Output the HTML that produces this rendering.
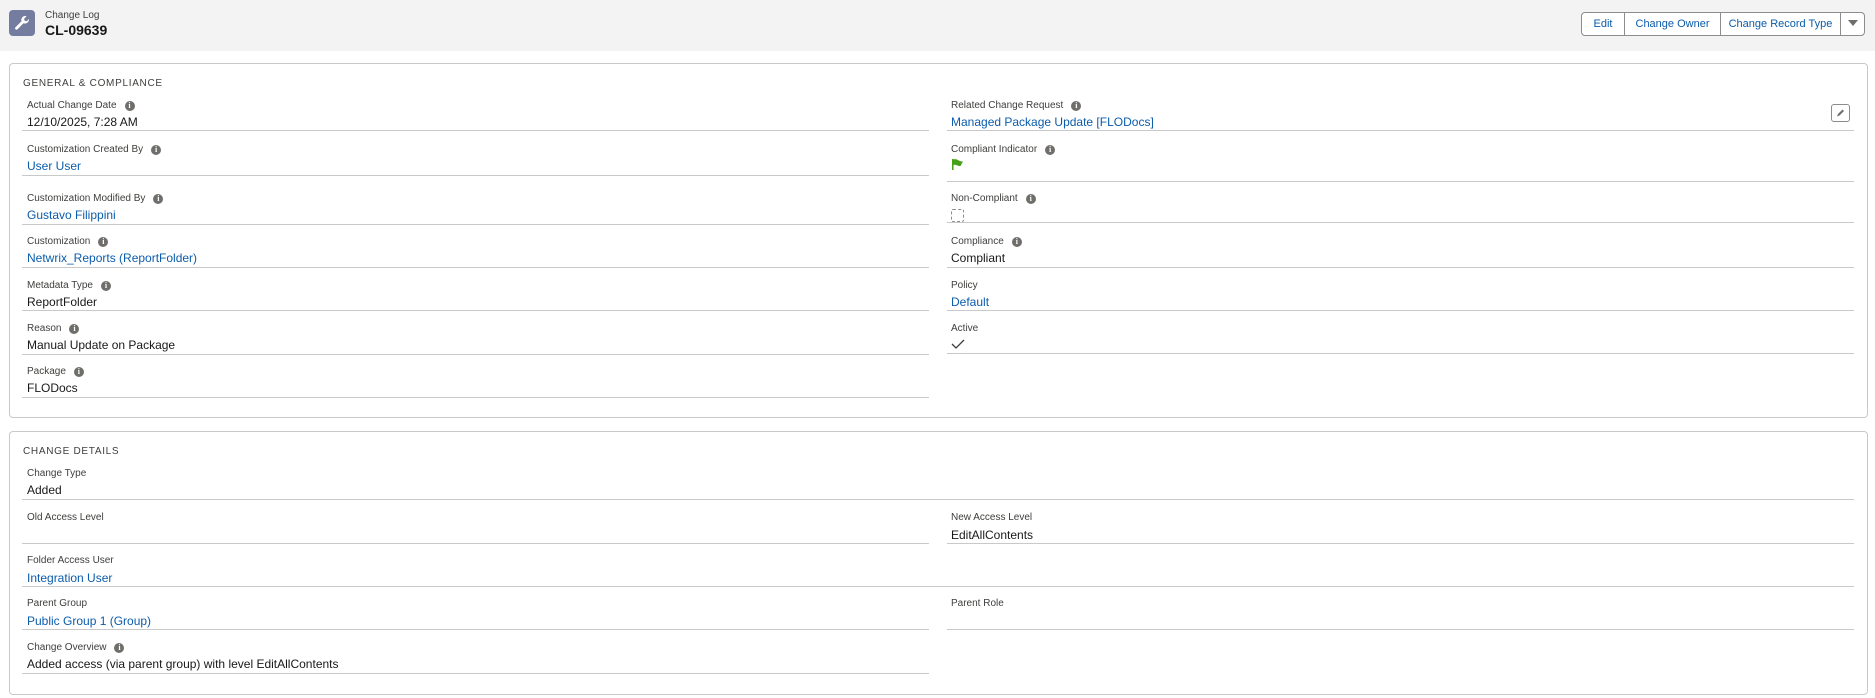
<!DOCTYPE html>
<html><head><meta charset="utf-8"><style>
body{margin:0;width:1875px;height:698px;background:#fff;font-family:"Liberation Sans",Arial,sans-serif;position:relative;overflow:hidden;color:#181818}
.a{position:absolute;white-space:nowrap}
.hdr{position:absolute;left:0;top:0;width:1875px;height:51px;background:#f3f3f3}
.panel{position:absolute;left:9px;width:1857px;border:1px solid #c9c9c9;border-radius:4px;background:#fff}
.t{font-size:10px;letter-spacing:.7px;color:#3e3e3c;text-transform:uppercase}
.l{font-size:10px;color:#3e3e3c}
.v{font-size:12px;color:#181818}
.k{font-size:12px;color:#0b5cab}
.ln{position:absolute;height:1px;background:#c9c9c9}
.i{display:inline-block;width:10px;height:10px;border-radius:50%;background:#706e6b;color:#fff;font-size:8px;font-weight:bold;text-align:center;line-height:10px;margin-left:8px;vertical-align:0px;font-family:"Liberation Serif",serif}
.btn{position:absolute;top:12px;height:24px;border:1px solid #8c8c8c;background:#fff;font-size:11px;color:#0b5cab;line-height:22px;text-align:center;box-sizing:border-box}
</style></head><body>
<div class="hdr"></div>
<div class="a" style="left:9px;top:10px;width:26px;height:26px;background:#747ca0;border-radius:4px">
<svg width="26" height="26" viewBox="0 0 26 26"><path d="M17 6a4 4 0 0 0-4.5 5.2L6.5 17.2a1.4 1.4 0 0 0 2 2l6-6A4 4 0 0 0 20 9l-2.3 2.3-2-.6-.6-2L17.4 6.5z" fill="#fff"/></svg></div>
<div class="a" style="left:45px;top:10px;font-size:10px;color:#3e3e3c">Change Log</div>
<div class="a" style="left:45px;top:22px;font-size:14px;font-weight:bold;color:#181818">CL-09639</div>
<div class="btn" style="left:1581px;width:44px;border-radius:4px 0 0 4px">Edit</div>
<div class="btn" style="left:1624px;width:97px">Change Owner</div>
<div class="btn" style="left:1720px;width:121px">Change Record Type</div>
<div class="btn" style="left:1840px;width:25px;border-radius:0 4px 4px 0"><svg width="10" height="6" viewBox="0 0 10 6" style="vertical-align:1px"><path d="M0 0h10L5 6z" fill="#706e6b"/></svg></div>

<div class="panel" style="top:63px;height:353px"></div>
<div class="a t" style="left:23px;top:78px">General &amp; Compliance</div>

<div class="a l" style="left:27px;top:100px">Actual Change Date<span class="i">i</span></div>
<div class="a v" style="left:27px;top:115px">12/10/2025, 7:28 AM</div>
<div class="ln" style="left:22px;top:130px;width:907px"></div>
<div class="a l" style="left:27px;top:144px">Customization Created By<span class="i">i</span></div>
<div class="a k" style="left:27px;top:159px">User User</div>
<div class="ln" style="left:22px;top:175px;width:907px"></div>
<div class="a l" style="left:27px;top:193px">Customization Modified By<span class="i">i</span></div>
<div class="a k" style="left:27px;top:208px">Gustavo Filippini</div>
<div class="ln" style="left:22px;top:224px;width:907px"></div>
<div class="a l" style="left:27px;top:236px">Customization<span class="i">i</span></div>
<div class="a k" style="left:27px;top:251px">Netwrix_Reports (ReportFolder)</div>
<div class="ln" style="left:22px;top:267px;width:907px"></div>
<div class="a l" style="left:27px;top:280px">Metadata Type<span class="i">i</span></div>
<div class="a v" style="left:27px;top:295px">ReportFolder</div>
<div class="ln" style="left:22px;top:310px;width:907px"></div>
<div class="a l" style="left:27px;top:323px">Reason<span class="i">i</span></div>
<div class="a v" style="left:27px;top:338px">Manual Update on Package</div>
<div class="ln" style="left:22px;top:354px;width:907px"></div>
<div class="a l" style="left:27px;top:366px">Package<span class="i">i</span></div>
<div class="a v" style="left:27px;top:381px">FLODocs</div>
<div class="ln" style="left:22px;top:397px;width:907px"></div>

<div class="a l" style="left:951px;top:100px">Related Change Request<span class="i">i</span></div>
<div class="a k" style="left:951px;top:115px">Managed Package Update [FLODocs]</div>
<div class="a" style="left:1831px;top:104px;width:19px;height:18px;border:1px solid #8c8c8c;border-radius:3px;box-sizing:border-box"><svg width="17" height="16" viewBox="0 0 17 16"><path d="M5 11.5l1-2.5 4.5-4.5 1.5 1.5-4.5 4.5z" fill="#706e6b"/></svg></div>
<div class="ln" style="left:947px;top:130px;width:907px"></div>
<div class="a l" style="left:951px;top:144px">Compliant Indicator<span class="i">i</span></div>
<svg class="a" style="left:951px;top:158px" width="14" height="14" viewBox="0 0 14 14"><path d="M1 1h1.5v11H1z M2.5 1.5C6 0 8 4 12 3.5L9.5 8C7 8.5 5 6 2.5 7z" fill="#45a117"/></svg>
<div class="ln" style="left:947px;top:181px;width:907px"></div>
<div class="a l" style="left:951px;top:193px">Non-Compliant<span class="i">i</span></div>
<div class="a" style="left:951px;top:209px;width:11px;height:11px;border:1px dashed #8c8c8c;border-radius:2px"></div>
<div class="ln" style="left:947px;top:222px;width:907px"></div>
<div class="a l" style="left:951px;top:236px">Compliance<span class="i">i</span></div>
<div class="a v" style="left:951px;top:251px">Compliant</div>
<div class="ln" style="left:947px;top:267px;width:907px"></div>
<div class="a l" style="left:951px;top:280px">Policy</div>
<div class="a k" style="left:951px;top:295px">Default</div>
<div class="ln" style="left:947px;top:310px;width:907px"></div>
<div class="a l" style="left:951px;top:323px">Active</div>
<svg class="a" style="left:951px;top:339px" width="14" height="10" viewBox="0 0 14 10"><path d="M1 5l4 4 8-8" stroke="#3e3e3c" stroke-width="1.3" fill="none"/></svg>
<div class="ln" style="left:947px;top:353px;width:907px"></div>

<div class="panel" style="top:431px;height:262px"></div>
<div class="a t" style="left:23px;top:446px">Change Details</div>
<div class="a l" style="left:27px;top:468px">Change Type</div>
<div class="a v" style="left:27px;top:483px">Added</div>
<div class="ln" style="left:22px;top:499px;width:1832px"></div>
<div class="a l" style="left:27px;top:512px">Old Access Level</div>
<div class="ln" style="left:22px;top:543px;width:907px"></div>
<div class="a l" style="left:951px;top:512px">New Access Level</div>
<div class="a v" style="left:951px;top:528px">EditAllContents</div>
<div class="ln" style="left:947px;top:543px;width:907px"></div>
<div class="a l" style="left:27px;top:555px">Folder Access User</div>
<div class="a k" style="left:27px;top:571px">Integration User</div>
<div class="ln" style="left:22px;top:586px;width:1832px"></div>
<div class="a l" style="left:27px;top:598px">Parent Group</div>
<div class="a k" style="left:27px;top:614px">Public Group 1 (Group)</div>
<div class="ln" style="left:22px;top:629px;width:907px"></div>
<div class="a l" style="left:951px;top:598px">Parent Role</div>
<div class="ln" style="left:947px;top:629px;width:907px"></div>
<div class="a l" style="left:27px;top:642px">Change Overview<span class="i">i</span></div>
<div class="a v" style="left:27px;top:657px">Added access (via parent group) with level EditAllContents</div>
<div class="ln" style="left:22px;top:673px;width:907px"></div>
</body></html>
